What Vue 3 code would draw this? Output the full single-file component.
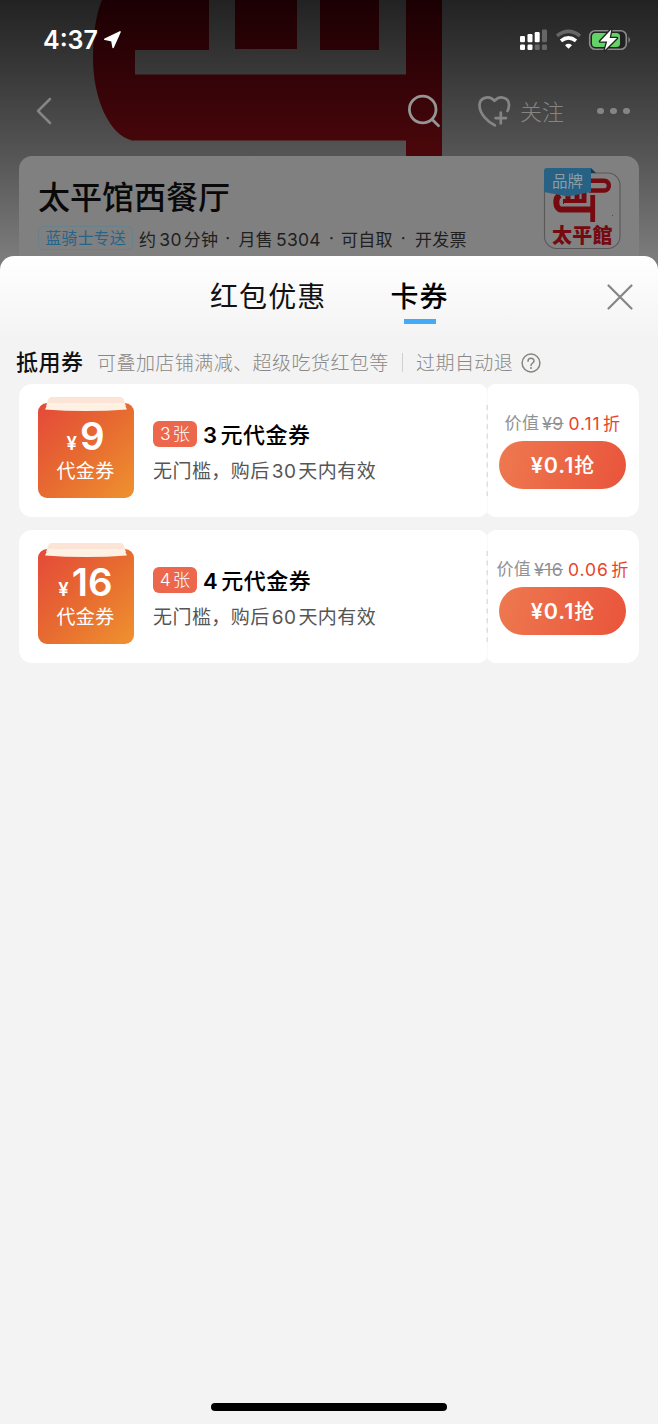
<script setup>
const coupons = [
  { value: '9', count: '3', title: '元代金券', days: '30', rate: '0.11', price: '0.1' },
  { value: '16', count: '4', title: '元代金券', days: '60', rate: '0.06', price: '0.1' },
]
</script>

<template>
  <main class="screen">
    <header class="hero">
      <svg class="hero-art" viewBox="0 0 658 270" aria-hidden="true">
        <defs>
          <linearGradient id="crimson" x1="0" y1="0" x2="0" y2="156" gradientUnits="userSpaceOnUse">
            <stop offset="0" stop-color="#1b0003" />
            <stop offset=".5" stop-color="#330307" />
            <stop offset="1" stop-color="#4b070b" />
          </linearGradient>
        </defs>
        <path
          fill="url(#crimson)"
          d="M102 0H209V50H135V74.500H406V0H442V156H406V140.500H132C109 135 93 98 93 58C93 34 96 14 102 0ZM235 0H297V49H235ZM320 0H379V50H320Z"
        />
      </svg>
      <div class="status">
        <span class="time">4:37</span>
        <svg class="arrow" width="18" height="18" viewBox="0 0 18 18"><path d="M16 .9L.9 8.300L7.900 9.700L9.100 16.400Z" fill="#fff" stroke="#fff" stroke-width="1.600" stroke-linejoin="round" /></svg>
        <svg class="indicators" width="112" height="24" viewBox="0 0 112 24">
          <g fill="#fff">
            <rect x="1" y="8" width="5" height="6.300" rx="1.200" /><rect x="8.500" y="6" width="5" height="8.300" rx="1.200" /><rect x="15.700" y="4" width="5" height="10.300" rx="1.200" />
            <rect x="1" y="16.500" width="5" height="5.500" rx="1.200" /><rect x="8.500" y="16.500" width="5" height="5.500" rx="1.200" />
          </g>
          <g fill="#666">
            <rect x="23" y="1.500" width="5" height="12.800" rx="1.200" /><rect x="15.700" y="16.500" width="5" height="5.500" rx="1.200" /><rect x="23" y="16.500" width="5" height="5.500" rx="1.200" />
          </g>
          <g fill="none" stroke-width="3.600">
            <path d="M38 7.800Q49.500 -1.200 61 7.800" stroke="#666" />
            <path d="M42 12.800Q49.500 6.800 57 12.800" stroke="#fff" />
          </g>
          <path d="M46 17.300Q49.500 14.400 53 17.300L49.500 20.800Z" fill="#fff" />
          <rect x="70.700" y="2.700" width="36.600" height="18.600" rx="5.500" fill="#222" stroke="#8b8b8b" stroke-width="1.600" />
          <rect x="73" y="5" width="28" height="14" rx="3.500" fill="#63d267" />
          <path d="M109.500 8.500Q112.500 12 109.500 15Z" fill="#888" />
          <path d="M92.300 1.500L81 13.500H88.200L85.700 22.300L98 10H90.700Z" fill="#fff" stroke="#222" stroke-width="2.600" stroke-linejoin="round" paint-order="stroke" />
        </svg>
      </div>
      <nav class="nav">
        <svg class="back" width="18" height="30" viewBox="0 0 18 30"><path d="M15 3L3 15L15 27" fill="none" stroke="#858585" stroke-width="2.500" stroke-linecap="round" stroke-linejoin="round" /></svg>
        <svg class="search" width="36" height="36" viewBox="0 0 36 36"><g fill="none" stroke="#959595" stroke-width="2.800" stroke-linecap="round"><circle cx="15.700" cy="16.500" r="13.300" /><path d="M25.200 26.500L31.500 32.700" /></g></svg>
        <svg class="heart" width="34" height="34" viewBox="0 0 34 34"><g fill="none" stroke="#858585" stroke-width="2.700" stroke-linecap="round" stroke-linejoin="round"><path d="M17.800 31.300C11 28 2.500 20 2.500 11.300C2.500 3.700 12 .7 17.500 6.800C23 .7 32.500 3.700 32 11.500Q31.800 14.300 30.500 17" /><path d="M23.800 18.700V29.500M18.500 24.100H29" /></g></svg>
        <span class="follow">关注</span>
        <span class="dots"><i></i><i></i><i></i></span>
      </nav>
      <section class="shop">
        <div class="shop-info">
          <h1>太平馆西餐厅</h1>
          <div class="facts">
            <span class="tag">蓝骑士专送</span>
            <span>约<b>30</b>分钟</span><em>·</em><span>月售<b>5304</b></span><em>·</em><span>可自取</span><em>·</em><span>开发票</span>
          </div>
        </div>
        <svg class="brand" width="80" height="84" viewBox="0 0 80 84">
          <rect x="1.500" y="6" width="75.500" height="75.500" rx="12" fill="#828282" stroke="#585858" stroke-width="1.100" />
          <g fill="none" stroke="#750a10">
            <path d="M46 13.800H61C67.500 13.800 67.500 23.500 61 23.500H46" stroke-width="4.400" />
            <path d="M17 28C11.500 31 12.500 42 18 42.500H50" stroke-width="6" />
            <path d="M20 34.500H42M25 26V36M34 26V36M41 26V36" stroke-width="5" />
            <path d="M49.700 28V55" stroke-width="4.800" />
            <path d="M46.200 27V37.500M21 36.800H47" stroke="#828282" stroke-width="1.600" />
          </g>
          <text x="9" y="76" class="brand-name">太平館</text>
          <circle cx="69.500" cy="48.500" r=".6" fill="#444" />
          <path d="M48 1L53 6H48Z" fill="#123a55" />
          <path d="M4 1H48V25L25 29.500L1 25V4Q1 1 4 1Z" fill="#276284" />
          <text x="9" y="19.500" class="brand-label">品牌</text>
        </svg>
      </section>
    </header>

    <section class="sheet">
      <div class="tabs">
        <span class="tab">红包优惠</span>
        <span class="tab active">卡券</span>
        <svg class="close" width="28" height="28" viewBox="0 0 28 28"><path d="M2.500 2.500L25.500 25.500M25.500 2.500L2.500 25.500" stroke="#858585" stroke-width="2.200" stroke-linecap="round" /></svg>
      </div>
      <div class="caption">
        <strong>抵用券</strong>
        <span class="note">可叠加店铺满减、超级吃货红包等</span>
        <i class="rule"></i>
        <span class="refund">过期自动退</span>
        <svg width="20" height="20" viewBox="0 0 20 20"><g fill="none" stroke="#85877f" stroke-width="1.500"><circle cx="10" cy="10" r="8.900" /><path d="M7 8.200C7 4.200 13 4.300 13 7.900C13 10.100 10 10 10 12.600" stroke-linecap="round" /></g><circle cx="10" cy="15" r="1" fill="#85877f" /></svg>
      </div>
      <article v-for="c in coupons" :key="c.value" class="coupon">
        <div class="main">
          <div class="voucher">
            <svg class="paper" width="96" height="16" viewBox="0 0 96 16"><path d="M14 0H82Q85 0 86 3L88 9H8L10 3Q11 0 14 0Z" fill="#fce4d6" /><path d="M10 6H86L89 12.500Q48 15.500 7 12.500Z" fill="#fcf1e2" /></svg>
            <div class="amount"><small>¥</small>{{ c.value }}</div>
            <div class="kind">代金券</div>
          </div>
          <div class="details">
            <div class="name"><span class="count"><b>{{ c.count }}</b>张</span><span class="headline"><b>{{ c.count }}</b>{{ c.title }}</span></div>
            <div class="terms">无门槛，购后<b>{{ c.days }}</b>天内有效</div>
          </div>
        </div>
        <div class="buy">
          <svg class="seam" width="24" height="133" viewBox="0 0 24 133"><path d="M5 0Q9 1 12 5Q15 1 19 0ZM5 133Q9 132 12 128Q15 132 19 133Z" fill="#f3f3f3" /><path d="M12.300 5V128" stroke="#f8f8f8" stroke-width="1" /><path d="M12.300 21V112" stroke="#dedede" stroke-width="1.500" stroke-dasharray="5 4.600" /></svg>
          <div class="worth"><span>价值</span><s>¥{{ c.value }}</s><span class="rate"><b>{{ c.rate }}</b>折</span></div>
          <button class="grab"><b>¥{{ c.price }}</b>抢</button>
        </div>
      </article>
      <div class="home"></div>
    </section>
  </main>
</template>

<style>
html, body { margin: 0; background: #f3f3f3; }
</style>

<style scoped>
* { box-sizing: border-box; }
.screen { width: 658px; height: 1424px; overflow: hidden; font-family: Inter, "Noto Sans CJK SC", sans-serif; color: #111; }
b, em, i { font-weight: inherit; font-style: normal; }
svg { display: block; flex: none; }
span, .terms, .kind, h1, button { white-space: nowrap; }
.hero { position: relative; height: 270px; background: linear-gradient(#222 0, #353535 60px, #555 155px, #7b7b7b 256px); }
.hero-art { position: absolute; left: 0; top: 0; width: 658px; height: 270px; }
.status { position: relative; display: flex; align-items: center; height: 80px; padding-left: 43px; }
.time { width: 55px; font-size: 25px; font-weight: 600; color: #fff; letter-spacing: 0; }
.arrow { margin-left: 6px; }
.indicators { margin-left: auto; margin-right: 27px; }
.nav { position: relative; display: flex; align-items: center; height: 62px; padding-left: 35px; color: #858585; }
.search { margin-left: 354px; }
.heart { margin-left: 34px; }
.follow { margin-left: 9px; padding-top: 2px; font-size: 22px; line-height: 30px; font-weight: 300; }
.dots { display: flex; gap: 6.500px; margin-left: 33px; }
.dots i { width: 6.500px; height: 6.500px; border-radius: 50%; background: #858585; }
.shop { position: relative; display: flex; justify-content: space-between; height: 114px; margin: 14px 19px 0; padding: 11px 16px 0 19px; border-radius: 13px 13px 0 0; background: #808080; }
h1 { margin: 8px 0 0; font-size: 32px; line-height: 46px; font-weight: 500; color: #090909; }
.facts { display: flex; align-items: center; height: 24px; margin-top: 5px; font-size: 17px; letter-spacing: .3px; color: #202020; }
.facts b { margin: 0 2px 0 3px; font-size: 17.500px; }
.facts em { width: 20px; padding-right: 1px; text-align: center; }
.facts em:nth-of-type(2) { width: 18px; }
.facts em:nth-of-type(3) { width: 22px; }
.tag { width: 95px; height: 24px; margin-right: 6px; border: 1px solid #67828f; border-radius: 5px; text-align: center; font-size: 16px; line-height: 23px; letter-spacing: .1px; color: #24658b; }
.brand-name { font: 900 20px "Noto Sans CJK TC", sans-serif; fill: #750a10; letter-spacing: .3px; }
.brand-label { font: 400 15.500px "Noto Sans CJK SC", sans-serif; fill: #8d9da5; }
.sheet { position: relative; height: 1168px; margin-top: -14px; border-radius: 14px 14px 0 0; background: linear-gradient(#fff 0, #f3f3f3 84px); }
.tabs { display: flex; align-items: flex-start; height: 83px; padding: 21px 24px 0 210px; }
.tab { position: relative; font-size: 28px; line-height: 40px; letter-spacing: 1.100px; }
.tab.active { margin-left: 64px; font-weight: 500; color: #000; }
.tab.active::after { content: ""; position: absolute; left: 13.500px; top: 42px; width: 32px; height: 5px; background: #43aaf5; }
.close { margin: 6px 0 0 auto; }
.caption { display: flex; align-items: center; height: 45px; padding: 2px 0 0 16px; font-size: 19px; letter-spacing: .45px; color: #888; font-weight: 300; }
.caption strong { width: 81px; margin-top: -5px; font-size: 22px; font-weight: 500; letter-spacing: .5px; color: #111; }
.note { width: 305px; margin-top: -2px; }
.rule { width: 1px; height: 19px; margin-right: 13px; background: #d0d0d0; }
.refund { width: 105px; margin-top: -2px; }
.coupon { display: flex; height: 133px; margin: 0 19px 13px; border-radius: 13px; background: #fff; }
.main { display: flex; width: 468px; padding-left: 19px; }
.voucher { position: relative; width: 96px; height: 95px; margin-top: 19px; border-radius: 9px; background: linear-gradient(135deg, #e4493a 0, #e76b30 50%, #ef922f 100%); color: #fff; text-align: center; }
.paper { position: absolute; left: 0; top: -6px; }
.amount { height: 56px; padding-top: 12px; font-size: 38.500px; line-height: 42px; font-weight: 600; letter-spacing: 0; margin-left: -1px; }
.amount small { font-size: 18.500px; margin-right: 3px; }
.kind { font-size: 19px; line-height: 26px; letter-spacing: .4px; margin-left: -1px; }
.details { padding: 36px 0 0 19px; }
.name { display: flex; align-items: center; height: 28px; }
.count { width: 44px; height: 26px; margin-right: 6px; border-radius: 6px; background: #ed674c; color: #fff; text-align: center; font-size: 17.500px; line-height: 26px; font-weight: 300; }
.count b { margin-right: 2px; }
.headline { padding-top: 2px; font-size: 22px; line-height: 28px; font-weight: 500; color: #000; letter-spacing: .5px; }
.headline b { margin-right: 3px; font-weight: 600; }
.terms { margin-top: 10px; font-size: 19px; line-height: 28px; letter-spacing: .45px; color: #555; }
.terms b { margin: 0 2px; }
.buy { position: relative; width: 152px; padding: 26px 0 0 12px; }
.seam { position: absolute; left: -12px; top: 0; }
.worth { display: flex; justify-content: center; width: 127px; height: 31px; font-size: 17px; line-height: 27px; letter-spacing: .4px; color: #929292; white-space: nowrap; }
.worth s { margin-left: 3px; font-size: 17.500px; }
.rate { margin-left: 5px; color: #e8432c; }
.rate b { margin-right: 2.500px; font-size: 17.500px; letter-spacing: .9px; }
.grab { display: block; width: 127px; height: 48px; padding: 0; border: 0; border-radius: 24px; background: linear-gradient(105deg, #ee7950, #e9543b); color: #fff; font: 500 20px/48px Inter, "Noto Sans CJK SC", sans-serif; }
.grab b { font-size: 21.500px; font-weight: 600; letter-spacing: .9px; }
.home { position: absolute; left: 211px; bottom: 13px; width: 236px; height: 8px; border-radius: 4px; background: #000; }
</style>
